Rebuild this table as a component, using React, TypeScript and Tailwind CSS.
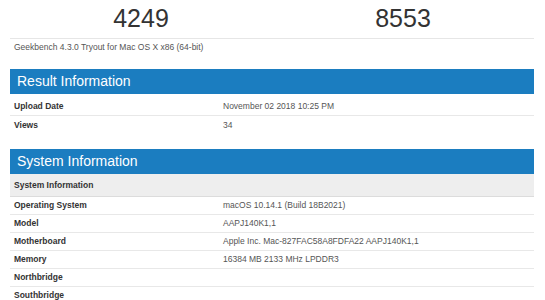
const FONT = "font-['Liberation_Sans',Arial,Helvetica,sans-serif]";

type Row = { label: string; value?: string };

const resultRows: Row[] = [
  { label: 'Upload Date', value: 'November 02 2018 10:25 PM' },
  { label: 'Views', value: '34' },
];

const systemRows: Row[] = [
  { label: 'Operating System', value: 'macOS 10.14.1 (Build 18B2021)' },
  { label: 'Model', value: 'AAPJ140K1,1' },
  { label: 'Motherboard', value: 'Apple Inc. Mac-827FAC58A8FDFA22 AAPJ140K1,1' },
  { label: 'Memory', value: '16384 MB 2133 MHz LPDDR3' },
  { label: 'Northbridge' },
  { label: 'Southbridge' },
];

function SectionHeader({ title }: { title: string }) {
  return (
    <div className="flex h-[25px] items-center bg-[#1b7dc0] px-[7px] text-[14px] text-white">
      {title}
    </div>
  );
}

function InfoRow({ row, last }: { row: Row; last?: boolean }) {
  return (
    <div
      className={`grid h-[18px] grid-cols-[209px_1fr] items-center px-[4px] text-[8.5px] ${
        last ? '' : 'border-b border-[#e8e8e8]'
      }`}
    >
      <span className="font-bold text-[#333]">{row.label}</span>
      <span className="text-[#555]">{row.value}</span>
    </div>
  );
}

export default function App() {
  return (
    <div className={`${FONT} h-[300px] w-[545px] overflow-hidden bg-white px-[10px]`}>
      <div className="w-[524px]">
        <div className="grid h-[39px] grid-cols-2 border-b border-[#e6e6e6]">
          <div className="flex items-center justify-center pb-[2px] text-[25px] font-light text-[#333]">
            4249
          </div>
          <div className="flex items-center justify-center pb-[2px] text-[25px] font-light text-[#333]">
            8553
          </div>
        </div>
        <div className="flex h-[17px] items-center px-[4px] text-[8.5px] text-[#555]">
          Geekbench 4.3.0 Tryout for Mac OS X x86 (64-bit)
        </div>

        <div className="mt-[13px]">
          <SectionHeader title="Result Information" />
          <div className="pt-[4px]">
            {resultRows.map((r, i) => (
              <InfoRow key={r.label} row={r} last={i === resultRows.length - 1} />
            ))}
          </div>
        </div>

        <div className="mt-[15px]">
          <SectionHeader title="System Information" />
          <div className="flex h-[23px] items-center border-b border-[#dcdcdc] bg-[#eeeeee] px-[4px] text-[8.5px] font-bold text-[#333]">
            System Information
          </div>
          {systemRows.map((r) => (
            <InfoRow key={r.label} row={r} />
          ))}
        </div>
      </div>
    </div>
  );
}
